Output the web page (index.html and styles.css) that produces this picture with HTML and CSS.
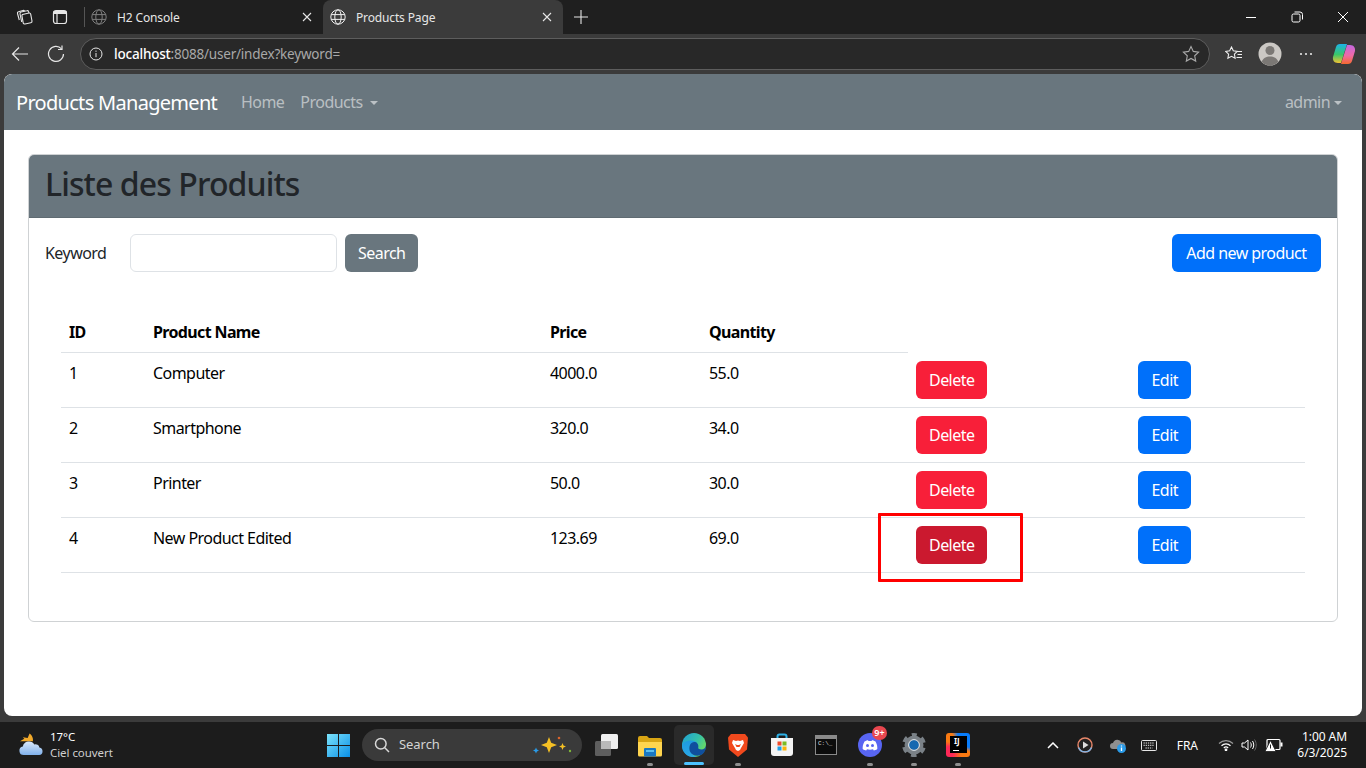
FILE: index.html
```html
<!DOCTYPE html>
<html lang="en">
<head>
<meta charset="utf-8">
<title>Products Page</title>
<link rel="stylesheet" href="styles.css">
</head>
<body>
<header class="tabbar">
  <div class="tab-tools">
    <svg class="ico16" viewBox="0 0 17 17" fill="none" stroke="#e6e6e6" stroke-width="1.100"><path d="M6.500 5.500l6.500-1.500a1.500 1.500 0 0 1 1.700 1.200l1.300 6.800a1.500 1.500 0 0 1-1.200 1.700l-5.800 1.300a1.500 1.500 0 0 1-1.800-1.200L6 7.200a1.500 1.500 0 0 1 .5-1.700z"/><path d="M13 4l-.4-1.300a1.400 1.400 0 0 0-1.700-1L5 3a1.500 1.500 0 0 0-1 1.800L5.700 13"/><path d="M8.500 2.300a1.300 1.300 0 0 0-1.600-.8L2.500 2.800a1.400 1.400 0 0 0-1 1.700L3.300 11"/></svg>
    <svg class="ico16 tool-gap" viewBox="0 0 16 16" fill="none" stroke="#e6e6e6" stroke-width="1.200"><rect x="1.500" y="1.500" width="13" height="13" rx="2.500"/><path d="M1.500 3.500h13" stroke-width="3"/><path d="M5 4v10"/></svg>
    <span class="tab-divider"></span>
  </div>
  <div class="tab tab-idle">
    <svg class="globe dim" viewBox="0 0 16 16" fill="none" stroke="currentColor" stroke-width="1"><circle cx="8" cy="8" r="7.200"/><ellipse cx="8" cy="8" rx="3.200" ry="7.200"/><path d="M1.200 5.600h13.600M1.200 10.400h13.600"/></svg>
    <span class="tab-title">H2 Console</span>
    <svg class="tab-close" viewBox="0 0 10 10" stroke="#e6e6e6" stroke-width="1.100"><path d="M1 1l8 8M9 1l-8 8"/></svg>
  </div>
  <div class="tab tab-active">
    <svg class="globe" viewBox="0 0 16 16" fill="none" stroke="currentColor" stroke-width="1"><circle cx="8" cy="8" r="7.200"/><ellipse cx="8" cy="8" rx="3.200" ry="7.200"/><path d="M1.200 5.600h13.600M1.200 10.400h13.600"/></svg>
    <span class="tab-title">Products Page</span>
    <svg class="tab-close" viewBox="0 0 10 10" stroke="#e6e6e6" stroke-width="1.100"><path d="M1 1l8 8M9 1l-8 8"/></svg>
  </div>
  <svg class="new-tab" viewBox="0 0 14 14" stroke="#e6e6e6" stroke-width="1.100"><path d="M7 0v14M0 7h14"/></svg>
  <div class="win-controls">
    <svg class="win-btn" viewBox="0 0 12 12" stroke="#fff" stroke-width="1"><path d="M1 6.500h10"/></svg>
    <svg class="win-btn" viewBox="0 0 12 12" fill="none" stroke="#fff" stroke-width="1"><rect x="1" y="3" width="8" height="8" rx="1.500"/><path d="M3.500 1h5.500a2.500 2.500 0 0 1 2.500 2.500v5"/></svg>
    <svg class="win-btn" viewBox="0 0 12 12" stroke="#fff" stroke-width="1"><path d="M1 1l10 10M11 1L1 11"/></svg>
  </div>
</header>

<nav class="toolbar">
  <svg class="tool-back" viewBox="0 0 18 16" fill="none" stroke="#e6e6e6" stroke-width="1.200"><path d="M17 8H1.500M8 1.500L1.500 8 8 14.500"/></svg>
  <svg class="tool-reload" viewBox="0 0 18 18" fill="none" stroke="#e6e6e6" stroke-width="1.200"><path d="M14.500 3.800A7.500 7.500 0 1 0 16.500 9"/><path d="M15 .5v4h-4"/></svg>
  <div class="urlbar">
    <svg class="url-info" viewBox="0 0 14 14" fill="none" stroke="#e6e6e6" stroke-width="1"><circle cx="7" cy="7" r="6"/><path d="M7 6v4.200M7 3.600v1.200"/></svg>
    <span class="url-host">localhost</span><span class="url-rest">:8088/user/index?keyword=</span>
    <svg class="url-star" viewBox="0 0 18 18" fill="none" stroke="#a8a8a8" stroke-width="1.100"><path d="M9 1.500l2.300 4.900 5.300.7-3.900 3.700 1 5.300L9 13.500l-4.700 2.600 1-5.300L1.400 7.100l5.300-.7z"/></svg>
  </div>
  <svg class="tool-fav" viewBox="0 0 18 16" fill="none" stroke="#eee" stroke-width="1.100"><path d="M6.500 1l1.800 3.800 4 .6-2.900 2.800.7 4L6.500 10.300 2.900 12.200l.7-4L.7 5.400l4-.6z"/><path d="M12 5.500h5M12.500 8.500h4.500M11.500 11.500h5.500"/></svg>
  <svg class="tool-profile" viewBox="0 0 24 24"><circle cx="12" cy="12" r="11.500" fill="#cbc8c4"/><circle cx="12" cy="8.500" r="4.500" fill="#7b7875"/><path d="M3.800 20c1-4 4.500-5.500 8.200-5.500s7.200 1.500 8.200 5.500A11.500 11.500 0 0 1 3.800 20z" fill="#7b7875"/></svg>
  <svg class="tool-more" viewBox="0 0 14 4" fill="#e6e6e6"><circle cx="2" cy="2" r="1.100"/><circle cx="7" cy="2" r="1.100"/><circle cx="12" cy="2" r="1.100"/></svg>
  <svg class="tool-copilot" viewBox="0 0 24 24" fill="none">
    <defs>
      <linearGradient id="cpA" x1="0" y1="0" x2="0" y2="1"><stop offset="0" stop-color="#1db3e8"/><stop offset=".55" stop-color="#38c76a"/><stop offset="1" stop-color="#f2c233"/></linearGradient>
      <linearGradient id="cpB" x1="0" y1="0" x2="0" y2="1"><stop offset="0" stop-color="#c467e0"/><stop offset=".55" stop-color="#ee6aa6"/><stop offset="1" stop-color="#f5692f"/></linearGradient>
    </defs>
    <path d="M8 2h7l-3.500 11L9 21H6C2 21 .5 18 1 15L4 5c.5-2 2-3 4-3z" fill="url(#cpA)"/>
    <path d="M16 22H9l3.500-11L15 3h3c4 0 5.500 3 5 6l-3 10c-.5 2-2 3-4 3z" fill="url(#cpB)"/>
  </svg>
</nav>

<div class="viewport-wrap">
  <main class="viewport">
    <div class="navbar">
      <a class="brand">Products Management</a>
      <a class="nav-link">Home</a>
      <a class="nav-link">Products <span class="caret"></span></a>
      <a class="nav-link nav-user">admin<span class="caret"></span></a>
    </div>
    <div class="content">
      <section class="card">
        <div class="card-header"><h2 class="card-title">Liste des Produits</h2></div>
        <div class="card-body">
          <form class="search-row">
            <label class="search-label">Keyword</label>
            <input class="search-input" type="text">
            <button class="btn btn-grey" type="button">Search</button>
            <button class="btn btn-blue btn-add" type="button">Add new product</button>
          </form>
          <div class="table-wrap">
            <table class="products">
              <colgroup><col class="c-id"><col class="c-name"><col class="c-price"><col class="c-qty"><col class="c-del"><col class="c-edit"></colgroup>
              <thead><tr><th>ID</th><th>Product Name</th><th>Price</th><th>Quantity</th></tr></thead>
              <tbody>
                <tr><td>1</td><td>Computer</td><td>4000.0</td><td>55.0</td><td><button class="btn btn-red" type="button">Delete</button></td><td><button class="btn btn-blue" type="button">Edit</button></td></tr>
                <tr><td>2</td><td>Smartphone</td><td>320.0</td><td>34.0</td><td><button class="btn btn-red" type="button">Delete</button></td><td><button class="btn btn-blue" type="button">Edit</button></td></tr>
                <tr><td>3</td><td>Printer</td><td>50.0</td><td>30.0</td><td><button class="btn btn-red" type="button">Delete</button></td><td><button class="btn btn-blue" type="button">Edit</button></td></tr>
                <tr><td>4</td><td>New Product Edited</td><td>123.69</td><td>69.0</td><td class="marked"><button class="btn btn-red-hover" type="button">Delete</button><span class="red-box"></span></td><td><button class="btn btn-blue" type="button">Edit</button></td></tr>
              </tbody>
            </table>
          </div>
        </div>
      </section>
    </div>
  </main>
</div>

<footer class="taskbar">
  <div class="weather">
    <svg class="weather-ico" viewBox="0 0 26 24"><defs><linearGradient id="cl" x1="0" y1="0" x2="0" y2="1"><stop offset="0" stop-color="#dbe9fb"/><stop offset="1" stop-color="#7fb0ea"/></linearGradient></defs><path d="M11 0c2 1.500 4 4 3.500 8H1l4.500-2.500L4 4l5 .8z" fill="#f0a92b"/><path d="M5 22.500a4.500 4.500 0 0 1-1-8.900A6.500 6.500 0 0 1 16 11.500a4 4 0 0 1 5.200 3.100A4 4 0 0 1 21 22.500z" fill="url(#cl)"/></svg>
    <div class="weather-text"><span class="temp">17°C</span><span class="sky">Ciel couvert</span></div>
  </div>
  <div class="tb-cell">
    <svg class="start" viewBox="0 0 23 23"><defs><linearGradient id="st" x1="0" y1="0" x2="1" y2="1"><stop offset="0" stop-color="#7be3fb"/><stop offset="1" stop-color="#0a8fe6"/></linearGradient></defs><path fill="url(#st)" d="M0 0h11v11H0zM12 0h11v11H12zM0 12h11v11H0zM12 12h11v11H12z"/></svg>
  </div>
  <div class="tb-search">
    <svg class="tb-lens" viewBox="0 0 16 16" fill="none" stroke="#d8d8d8" stroke-width="1.500"><circle cx="6.800" cy="6.800" r="5.300"/><path d="M10.800 10.800L15 15"/></svg>
    <span class="tb-search-text">Search</span>
    <svg class="tb-spark" viewBox="0 0 40 22"><path d="M16 3l2.200 5.800L24 11l-5.800 2.200L16 19l-2.200-5.800L8 11l5.800-2.200z" fill="#f5c024"/><path d="M29.500 9l1 2.500 2.500 1-2.500 1-1 2.500-1-2.500-2.500-1 2.500-1z" fill="#f5c024"/><circle cx="26" cy="4" r="1.300" fill="#d9642c"/><circle cx="37" cy="17" r="1.200" fill="#7cb53a"/><path d="M3 13.500l.9 2.100 2.100.9-2.100.9-.9 2.100-.9-2.100L0 16.500l2.100-.9z" fill="#2a9be8"/></svg>
  </div>
  <div class="tb-cell">
    <svg class="tb-ico" viewBox="0 0 24 24"><rect x="1" y="8" width="16" height="15" rx="1.500" fill="#5e5e5e"/><rect x="7" y="1" width="17" height="15" rx="1.500" fill="#f0f0f0"/><rect x="7" y="8" width="10" height="8" fill="#b9b9b9"/></svg>
  </div>
  <div class="tb-cell"><span class="run-dot"></span>
    <svg class="tb-ico" viewBox="0 0 24 24"><path d="M0 5a2 2 0 0 1 2-2h7l2 2h11a2 2 0 0 1 2 2v15H0z" fill="#d9a514"/><path d="M0 9h24v13a1.500 1.500 0 0 1-1.500 1.500h-21A1.500 1.500 0 0 1 0 22z" fill="#ffd54f"/><rect x="6" y="15" width="12" height="8.500" rx="1" fill="#1a78c2"/><rect x="8" y="17" width="8" height="2" fill="#5cc0ef"/></svg>
  </div>
  <div class="tb-cell tb-active"><span class="run-bar"></span>
    <svg class="tb-ico" viewBox="0 0 24 24"><defs><linearGradient id="ed1" x1="0" y1="0" x2="1" y2=".6"><stop offset="0" stop-color="#1f9fd8"/><stop offset=".6" stop-color="#35c1a8"/><stop offset="1" stop-color="#6edc5e"/></linearGradient><linearGradient id="ed2" x1="0" y1="0" x2="0" y2="1"><stop offset="0" stop-color="#1e9ae0"/><stop offset="1" stop-color="#2aa8e8"/></linearGradient></defs><circle cx="12" cy="12" r="12" fill="url(#ed1)"/><path d="M0 12.500C.5 9.500 4.500 7.500 9 7.500c3 0 5 1 6 2.500-3-1.500-7 0-7.500 4-.4 3.500 2 7.500 6.500 9.800C6 25 0 20 0 12.500z" fill="url(#ed2)"/><path d="M15 10c1.500 1.500 1.500 3.500 1.200 4.800-.2 1 1.500 1.700 3 1.700 2.800 0 4.800-1.800 4.800-4.500V14c-.5 5-3.500 7.500-5 8-4.500 2-9.500 0-11-3.500-1-2.500-1-6.500 1.500-8.500 2-1.500 4.500-1 5.500 0z" fill="#0f4f9e"/></svg>
  </div>
  <div class="tb-cell"><span class="run-dot"></span>
    <svg class="tb-ico" viewBox="0 0 24 24"><path d="M5 1h14l3 3.500-1 12L12 24l-9-7.500-1-12z" fill="#f1491d"/><path d="M7 7l3 1 2-.5 2 .5 3-1 1 3-3 5-1 2-2 1-2-1-1-2-3-5z" fill="#fff"/><path d="M9 11l2 1h2l2-1-1.500 3h-3z" fill="#f1491d"/></svg>
  </div>
  <div class="tb-cell">
    <svg class="tb-ico" viewBox="0 0 24 24"><path d="M7.500 6V3.500A2 2 0 0 1 9.500 1.500h5a2 2 0 0 1 2 2V6" fill="none" stroke="#2db0e6" stroke-width="2"/><path d="M1 5h22v15a3 3 0 0 1-3 3H4a3 3 0 0 1-3-3z" fill="#f4f4f4"/><rect x="7.500" y="8.500" width="4" height="4" fill="#ef4b2a"/><rect x="12.500" y="8.500" width="4" height="4" fill="#7cbb23"/><rect x="7.500" y="13.500" width="4" height="4" fill="#1d9fe8"/><rect x="12.500" y="13.500" width="4" height="4" fill="#fbb40a"/></svg>
  </div>
  <div class="tb-cell">
    <div class="term"><span class="term-bar"></span><span class="term-text">C:\_</span></div>
  </div>
  <div class="tb-cell"><span class="run-dot"></span>
    <svg class="tb-ico" viewBox="0 0 24 24"><circle cx="12" cy="12" r="12" fill="#5865f2"/><path d="M6.500 8.500c1.500-.8 3-1.200 3.500-1.200l.4.800h3.200l.4-.8c.5 0 2 .4 3.500 1.200 1.500 2.500 2 5 1.800 7.500-1.300 1-2.500 1.400-3.500 1.500l-.8-1.200c-1.700.5-4.300.5-6 0l-.8 1.200c-1-.1-2.200-.5-3.500-1.500-.2-2.500.3-5 1.800-7.500z" fill="#fff"/><circle cx="9.500" cy="12.500" r="1.500" fill="#5865f2"/><circle cx="14.500" cy="12.500" r="1.500" fill="#5865f2"/></svg>
    <span class="badge">9+</span>
  </div>
  <div class="tb-cell"><span class="run-dot"></span>
    <svg class="tb-ico" viewBox="0 0 24 24"><circle cx="12" cy="12" r="9.500" fill="#7a8187"/><circle cx="12" cy="12" r="10.300" fill="none" stroke="#7a8187" stroke-width="3.400" stroke-dasharray="5.500 5.290" stroke-dashoffset="2.700" transform="rotate(-90 12 12)"/><circle cx="12" cy="12" r="5" fill="#1668b0"/><circle cx="12" cy="12" r="5.400" fill="none" stroke="#dfe6ec" stroke-width="1"/></svg>
  </div>
  <div class="tb-cell"><span class="run-dot"></span>
    <div class="ij"><span class="ij-back"></span><span class="ij-front">IJ<span class="ij-line"></span></span></div>
  </div>
  <div class="tray">
    <svg class="tray-chev" viewBox="0 0 12 7" fill="none" stroke="#fff" stroke-width="1.500"><path d="M1 6l5-5 5 5"/></svg>
    <svg class="tray-play" viewBox="0 0 16 16"><circle cx="8" cy="8" r="7" fill="#222" stroke="#e9876a" stroke-width="1.400"/><path d="M1.500 10.500A7 7 0 0 0 14.500 10.500" fill="none" stroke="#7db4e6" stroke-width="1.400"/><path d="M6 4.500l5.500 3.500L6 11.500z" fill="#ddd"/></svg>
    <svg class="tray-cloud" viewBox="0 0 16 16"><path d="M3 12a3 3 0 0 1 0-6 4.500 4.500 0 0 1 8.500-.5A3 3 0 0 1 13 11.500V12z" fill="#8f8f8f"/><circle cx="11.500" cy="11.500" r="4.500" fill="#2a9be8"/><path d="M11.500 10.500v3.500M11.500 8.500v1" stroke="#fff" stroke-width="1.300"/></svg>
    <svg class="tray-kbd" viewBox="0 0 16 11" fill="none" stroke="#fff" stroke-width=".9"><rect x=".5" y=".5" width="15" height="10" rx="1"/><path d="M2.500 3h11M2.500 5.300h11M4.500 8h7" stroke-dasharray="1.300 .9"/></svg>
    <span class="tray-lang">FRA</span>
    <svg class="tray-wifi" viewBox="0 0 16 12" fill="none" stroke="#fff" stroke-width="1.200"><path d="M1 4.500c4-3.800 10-3.800 14 0" stroke="#999"/><path d="M3.500 6.800c2.600-2.500 6.400-2.500 9 0"/><path d="M5.800 9c1.300-1.200 3.100-1.200 4.400 0"/><circle cx="8" cy="10.800" r=".8" fill="#fff"/></svg>
    <svg class="tray-sound" viewBox="0 0 16 14" fill="none" stroke="#fff" stroke-width="1"><path d="M1 5h2.500L7 2v10L3.500 9H1z"/><path d="M9.500 4.500c1 1.500 1 3.500 0 5M11.500 3c1.700 2.500 1.700 5.500 0 8"/><path d="M13.500 1.500c2.300 3.300 2.300 7.700 0 11" stroke="#666"/></svg>
    <svg class="tray-batt" viewBox="0 0 18 14"><rect x="2" y="1.500" width="13" height="10" rx="1" fill="none" stroke="#fff" stroke-width="1.200"/><rect x="15.500" y="4.500" width="2" height="4" fill="#fff"/><path d="M5.500 2.500L0 13.500h11z" fill="#fff" stroke="#1c1c1c" stroke-width=".8"/><path d="M5.500 6.500v4" stroke="#1c1c1c" stroke-width="1"/></svg>
    <div class="clock"><span>1:00 AM</span><span>6/3/2025</span></div>
  </div>
</footer>
</body>
</html>
```
FILE: styles.css
```css
* { box-sizing: border-box; }
html, body { margin: 0; padding: 0; }
body {
  width: 1366px; height: 768px; overflow: hidden;
  display: flex; flex-direction: column;
  font-family: "Noto Sans", "Open Sans", sans-serif;
  font-size: 16px; color: #212529; background: #1c1c1c;
  letter-spacing: -0.034em;
}
svg { display: block; flex: none; }

/* browser tab strip */
.tabbar { height: 34px; background: #1f1f1f; display: flex; align-items: flex-end; color: #e6e6e6; font-size: 12px; letter-spacing: -0.012em; }
.tab-tools { width: 85px; height: 34px; display: flex; align-items: center; padding-left: 16px; }
.ico16 { width: 17px; height: 17px; }
.tool-gap { margin-left: 19px; width: 16px; height: 16px; }
.tab-divider { width: 1px; height: 20px; background: #555; margin-left: 16px; }
.tab { height: 34px; display: flex; align-items: center; }
.tab-idle { width: 238px; padding-left: 6px; }
.tab-active { width: 240px; padding-left: 7px; background: #3b3b3b; border-radius: 8px 8px 0 0; }
.globe { width: 16px; height: 16px; color: #f0f0f0; margin-right: 10px; }
.globe.dim { color: #7e7e7e; margin-right: 10px; }
.tab-close { width: 10px; height: 10px; margin-left: auto; margin-right: 11px; }
.new-tab { width: 14px; height: 14px; margin: 0 0 10px 11px; }
.win-controls { margin-left: auto; height: 34px; display: flex; align-items: center; padding-right: 17px; gap: 34px; }
.win-btn { width: 12px; height: 12px; }

/* browser toolbar */
.toolbar { height: 40px; background: #3b3b3b; display: flex; align-items: center; position: relative; }
.tool-back { width: 18px; height: 16px; margin-left: 11px; }
.tool-reload { width: 18px; height: 18px; margin-left: 18px; }
.urlbar { width: 1130px; height: 32px; margin-left: 15px; background: #282828; border: 1px solid #5d5d5d; border-radius: 16px; display: flex; align-items: center; padding-left: 8px; font-size: 13.500px; letter-spacing: -0.015em; }
.url-info { width: 14px; height: 14px; margin-right: 11px; }
.url-host { color: #fff; font-weight: 500; }
.url-rest { color: #a9a9a9; }
.url-star { width: 18px; height: 18px; margin-left: auto; margin-right: 9px; }
.tool-fav { width: 18px; height: 16px; margin-left: 15px; }
.tool-profile { width: 24px; height: 24px; margin-left: 15px; }
.tool-more { width: 14px; height: 4px; margin-left: 17px; }
.tool-copilot { width: 24px; height: 24px; margin-left: 19px; }

/* page viewport */
.viewport-wrap { flex: 1; background: #3b3b3b; padding: 0 4px 6px; min-height: 0; }
.viewport { height: 100%; background: #fff; border-radius: 8px; overflow: hidden; }

.navbar { height: 56px; background: #69767e; display: flex; align-items: center; padding: 0 12px; border-radius: 8px 8px 0 0; }
.brand { font-size: 20px; color: #fff; margin-right: 16px; width: 201px; white-space: nowrap; letter-spacing: -0.035em; }
.nav-link { padding: 8px; color: rgba(255,255,255,.55); }
.nav-user { margin-left: auto; }
.caret { display: inline-block; margin-left: 4px; vertical-align: 3px; border-top: 4px solid; border-left: 4px solid transparent; border-right: 4px solid transparent; width: 0; height: 0; }

.content { padding: 24px; }
.card { border: 1px solid #cfd2d4; border-radius: 6px; height: 468px; overflow: hidden; }
.card-header { height: 63px; background: #69767e; padding: 10px 16px 0; border-bottom: 1px solid #5f6b72; }
.card-title { margin: 0; font-size: 32px; font-weight: 500; line-height: 38px; letter-spacing: -0.028em; }
.card-body { padding: 16px; }

.search-row { display: flex; align-items: center; height: 38px; }
.search-label { width: 85px; }
.search-input { width: 207px; height: 38px; border: 1px solid #dee2e6; border-radius: 6px; background: #fff; margin: 0 8px 0 0; }
.btn { height: 38px; border: 0; border-radius: 6px; color: #fff; font: inherit; letter-spacing: inherit; padding: 0 13px; display: inline-block; }
.btn-grey { background: #69767e; }
.btn-blue { background: #0070fa; padding: 0 13.500px; }
.btn-red { background: #f81f39; }
.btn-red-hover { background: #cb192f; }
.btn-add { margin-left: auto; padding: 0 14.500px; }

.table-wrap { margin-top: 40px; padding: 0 16px; }
.products { width: 1244px; border-collapse: separate; border-spacing: 0; table-layout: fixed; color: #000; }
.c-id { width: 84px; } .c-name { width: 397px; } .c-price { width: 159px; } .c-qty { width: 207px; } .c-del { width: 222px; } .c-edit { width: 175px; }
.products th, .products td { padding: 8px; text-align: left; vertical-align: top; border-bottom: 1px solid #dee2e6; line-height: 24px; }
.products th { font-weight: 700; letter-spacing: -0.04em; }
.marked { position: relative; }
.red-box { position: absolute; left: -30px; top: -5px; width: 145px; height: 69px; border: 3px solid #f00; border-radius: 1px; }

/* windows taskbar */
.taskbar { height: 46px; background: #1c1c1c; display: flex; align-items: center; color: #fff; font-size: 12px; letter-spacing: -0.005em; }
.weather { width: 316px; display: flex; align-items: center; padding-left: 19px; }
.weather-ico { width: 25px; height: 24px; margin-right: 6px; }
.weather-text { display: flex; flex-direction: column; line-height: 16px; font-size: 11.500px; }
.sky { color: #cfcfcf; }
.tb-cell { width: 44px; height: 40px; display: flex; align-items: center; justify-content: center; position: relative; }
.tb-active { width: 40px; margin: 0 2px; background: #2a2a2a; border-radius: 5px; }
.start { width: 23px; height: 23px; }
.tb-search { width: 220px; height: 32px; margin: 0 2px; background: #3a3a3a; border-radius: 16px; display: flex; align-items: center; padding-left: 12px; }
.tb-lens { width: 16px; height: 16px; margin-right: 9px; }
.tb-search-text { color: #d4d4d4; font-size: 13px; line-height: 30px; margin-top: -2px; }
.tb-spark { width: 40px; height: 22px; margin-left: auto; margin-right: 9px; }
.tb-ico { width: 24px; height: 24px; }
.run-dot { position: absolute; bottom: -1px; left: 19px; width: 6px; height: 3px; border-radius: 2px; background: #8e8e8e; }
.run-bar { position: absolute; bottom: 0; left: 10px; width: 20px; height: 3px; border-radius: 2px; background: #4cc2ff; }
.badge { position: absolute; top: 1px; left: 24px; width: 15px; height: 14px; border-radius: 7px; background: #e8474f; color: #fff; font-size: 9px; line-height: 14px; text-align: center; letter-spacing: 0; font-weight: 600; }
.term { width: 22px; height: 20px; background: #0c0c0c; border: 1px solid #8a8a8a; display: flex; flex-direction: column; overflow: hidden; }
.term-bar { height: 3px; background: #8a8a8a; flex: none; }
.term-text { font-size: 6px; line-height: 9px; color: #ddd; font-family: "Liberation Mono", monospace; letter-spacing: 0; padding-left: 2px; }
.ij { width: 24px; height: 24px; position: relative; }
.ij-back { position: absolute; inset: 0; border-radius: 3px; background: conic-gradient(#087cfa 0 28%, #f97a12 34% 45%, #fe2857 58% 72%, #f97a12 80% 92%, #087cfa 100%); }
.ij-front { position: absolute; left: 4px; top: 3px; width: 17px; height: 17px; background: #000; color: #fff; font-size: 8px; font-weight: 700; line-height: 10px; padding-left: 4px; letter-spacing: 0; }
.ij-line { position: absolute; left: 3px; bottom: 2px; width: 6px; height: 1px; background: #fff; }

.tray { margin-left: auto; display: flex; align-items: center; height: 40px; }
.tray-chev { width: 12px; height: 7px; margin-right: 18px; }
.tray-play { width: 16px; height: 16px; margin-right: 17px; }
.tray-cloud { width: 16px; height: 16px; margin-right: 15px; }
.tray-kbd { width: 16px; height: 11px; margin-right: 18px; }
.tray-lang { width: 24px; text-align: center; margin-right: 19px; }
.tray-wifi { width: 16px; height: 12px; margin-right: 7px; }
.tray-sound { width: 16px; height: 14px; margin-right: 8px; }
.tray-batt { width: 18px; height: 14px; margin-right: 14px; }
.clock { display: flex; flex-direction: column; align-items: flex-end; line-height: 16px; margin-right: 19px; }
```
